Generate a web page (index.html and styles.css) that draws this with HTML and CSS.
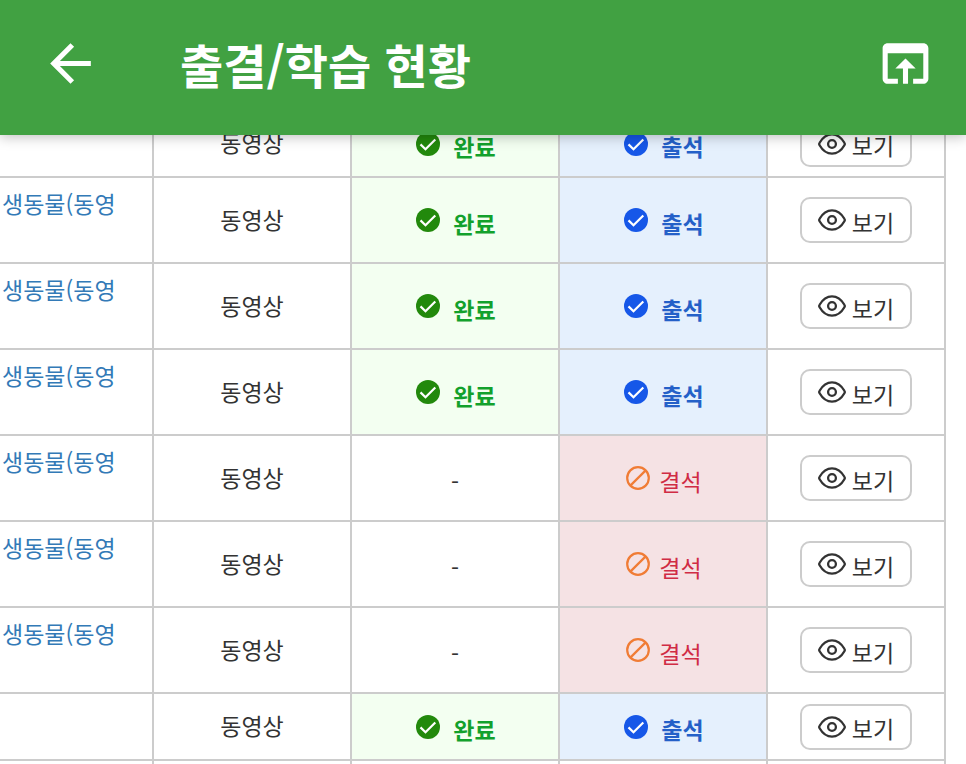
FILE: index.html
```
<!DOCTYPE html>
<html lang="ko">
<head>
    <meta charset="UTF-8">
    <meta name="viewport" content="width=device-width, initial-scale=1.0">
    <title>출결/학습 현황</title>
    <link rel="stylesheet" href="styles.css">
</head>
<body>
    <!-- shared icons -->
    <svg class="sprite" aria-hidden="true">
        <symbol id="check" viewBox="0 0 24 24">
            <circle cx="12" cy="12" r="12" fill="currentColor"/>
            <path d="M4.5 12.4l5 4.9 9.8-9.8" fill="none" stroke="#fff" stroke-width="2.2"/>
        </symbol>
        <symbol id="ban" viewBox="0 0 24 24">
            <circle cx="12" cy="12" r="10.8" fill="none" stroke="currentColor" stroke-width="2.2"/>
            <path d="M4.6 19.4L19.4 4.6" stroke="currentColor" stroke-width="2.2"/>
        </symbol>
        <symbol id="eye" viewBox="0 0 28 22">
            <path d="M1.6 12.2Q.8 11 1.6 9.8C4.6 4.6 9 1.4 14 1.4s9.4 3.2 12.4 8.4q.8 1.2 0 2.4C23.400 17.400 19 20.600 14 20.600S4.600 17.400 1.600 12.200z" fill="none" stroke="currentColor" stroke-width="2.3" stroke-linejoin="round"/>
            <circle cx="14" cy="11" r="3.9" fill="none" stroke="currentColor" stroke-width="2.3"/>
        </symbol>
    </svg>

    <header class="app-bar">
        <button class="icon-button" type="button" aria-label="뒤로">
            <svg viewBox="0 0 24 24"><path d="M20 11H7.83l5.59-5.59L12 4l-8 8 8 8 1.41-1.41L7.83 13H20v-2z"/></svg>
        </button>
        <h1 class="title">출결/학습 현황</h1>
        <button class="icon-button" type="button" aria-label="브라우저에서 열기">
            <svg viewBox="0 0 24 24"><path d="M19 4H5c-1.11 0-2 .9-2 2v12c0 1.1.89 2 2 2h4v-2H5V8h14v10h-4v2h4c1.1 0 2-.9 2-2V6c0-1.1-.89-2-2-2zm-7 6l-4 4h3v6h2v-6h3l-4-4z"/></svg>
        </button>
    </header>

    <main class="content">
        <table class="lessons">
            <colgroup>
                <col>
                <col class="col-type">
                <col class="col-status">
                <col class="col-status">
                <col class="col-view">
            </colgroup>
            <tbody>
                <tr class="short">
                    <td class="name"></td>
                    <td class="type">동영상</td>
                    <td class="done"><div class="status"><svg><use href="#check"/></svg><span>완료</span></div></td>
                    <td class="present"><div class="status"><svg><use href="#check"/></svg><span>출석</span></div></td>
                    <td><button class="view" type="button"><svg><use href="#eye"/></svg><span>보기</span></button></td>
                </tr>
                <tr>
                    <td class="name"><a href="#">생동물(동영</a></td>
                    <td class="type">동영상</td>
                    <td class="done"><div class="status"><svg><use href="#check"/></svg><span>완료</span></div></td>
                    <td class="present"><div class="status"><svg><use href="#check"/></svg><span>출석</span></div></td>
                    <td><button class="view" type="button"><svg><use href="#eye"/></svg><span>보기</span></button></td>
                </tr>
                <tr>
                    <td class="name"><a href="#">생동물(동영</a></td>
                    <td class="type">동영상</td>
                    <td class="done"><div class="status"><svg><use href="#check"/></svg><span>완료</span></div></td>
                    <td class="present"><div class="status"><svg><use href="#check"/></svg><span>출석</span></div></td>
                    <td><button class="view" type="button"><svg><use href="#eye"/></svg><span>보기</span></button></td>
                </tr>
                <tr>
                    <td class="name"><a href="#">생동물(동영</a></td>
                    <td class="type">동영상</td>
                    <td class="done"><div class="status"><svg><use href="#check"/></svg><span>완료</span></div></td>
                    <td class="present"><div class="status"><svg><use href="#check"/></svg><span>출석</span></div></td>
                    <td><button class="view" type="button"><svg><use href="#eye"/></svg><span>보기</span></button></td>
                </tr>
                <tr>
                    <td class="name"><a href="#">생동물(동영</a></td>
                    <td class="type">동영상</td>
                    <td class="none">-</td>
                    <td class="absent"><div class="status"><svg><use href="#ban"/></svg><span>결석</span></div></td>
                    <td><button class="view" type="button"><svg><use href="#eye"/></svg><span>보기</span></button></td>
                </tr>
                <tr>
                    <td class="name"><a href="#">생동물(동영</a></td>
                    <td class="type">동영상</td>
                    <td class="none">-</td>
                    <td class="absent"><div class="status"><svg><use href="#ban"/></svg><span>결석</span></div></td>
                    <td><button class="view" type="button"><svg><use href="#eye"/></svg><span>보기</span></button></td>
                </tr>
                <tr>
                    <td class="name"><a href="#">생동물(동영</a></td>
                    <td class="type">동영상</td>
                    <td class="none">-</td>
                    <td class="absent"><div class="status"><svg><use href="#ban"/></svg><span>결석</span></div></td>
                    <td><button class="view" type="button"><svg><use href="#eye"/></svg><span>보기</span></button></td>
                </tr>
                <tr class="short">
                    <td class="name"></td>
                    <td class="type">동영상</td>
                    <td class="done"><div class="status"><svg><use href="#check"/></svg><span>완료</span></div></td>
                    <td class="present"><div class="status"><svg><use href="#check"/></svg><span>출석</span></div></td>
                    <td><button class="view" type="button"><svg><use href="#eye"/></svg><span>보기</span></button></td>
                </tr>
                <tr>
                    <td></td>
                    <td></td>
                    <td></td>
                    <td></td>
                    <td></td>
                </tr>
            </tbody>
        </table>
    </main>
</body>
</html>
```

FILE: styles.css
```
* {
    box-sizing: border-box;
}
body {
    display: flex;
    flex-direction: column;
    height: 100vh;
    margin: 0;
    overflow: hidden;
    background-color: #fff;
    color: #333;
    font-family: "Noto Sans CJK KR", sans-serif;
    font-size: 23px;
    line-height: 32px;
}
button {
    font: inherit;
    color: inherit;
    cursor: pointer;
}
.sprite {
    position: absolute;
    width: 0;
    height: 0;
}

/* top bar */
.app-bar {
    position: relative;
    z-index: 1;
    display: flex;
    flex-shrink: 0;
    align-items: center;
    height: 135px;
    padding: 0 30px 8px 40px;
    background-color: #41a142;
    color: #fff;
    box-shadow: 0 2px 12px rgba(0, 0, 0, 0.25);
}
.icon-button {
    padding: 0;
    border: none;
    background: none;
}
.icon-button svg {
    display: block;
    width: 61px;
    height: 61px;
    fill: currentColor;
}
.title {
    flex: 1;
    margin: 0 0 0 79px;
    font-size: 47px;
    line-height: 64px;
    font-weight: bold;
}

/* lesson table, scrolled partly under the bar */
.content {
    flex: 1;
    min-height: 0;
    margin-top: -24px;
    padding-right: 20px;
    overflow: hidden;
}
.lessons {
    width: 100%;
    table-layout: fixed;
    border-collapse: separate;
    border-spacing: 0;
    text-align: center;
}
.col-type {
    width: 198px;
}
.col-status {
    width: 208px;
}
.col-view {
    width: 178px;
}
.lessons td {
    height: 86px;
    padding: 0;
    border-right: 2px solid #ccc;
    border-bottom: 2px solid #ccc;
    vertical-align: middle;
}
.lessons .short td {
    height: 67px;
}
.lessons .name {
    padding: 9px 0 0 2px;
    text-align: left;
    vertical-align: top;
}
.lessons .type {
    padding-bottom: 3px;
}
.lessons .none {
    padding-top: 6px;
}
.name a {
    color: #337ab7;
    text-decoration: none;
}
.status {
    display: flex;
    align-items: center;
    justify-content: center;
    gap: 13px;
    padding-left: 2px;
    font-weight: bold;
}
.status svg {
    width: 24px;
    height: 24px;
}
.status span {
    padding-top: 5px;
}
.done {
    background-color: #f3fff1;
    color: #12a12c;
}
.done svg {
    color: #22890c;
}
.present {
    background-color: #e5f0fd;
    color: #2460c8;
}
.present svg {
    color: #1657e8;
}
.absent {
    background-color: #f5e2e4;
    color: #d02c44;
}
.absent .status {
    gap: 9px;
    font-weight: normal;
}
.absent svg {
    color: #f07c35;
}
.view {
    display: inline-flex;
    align-items: center;
    gap: 6px;
    height: 46px;
    padding: 0 16px;
    border: 2px solid #ccc;
    border-radius: 10px;
    background-color: #fff;
    vertical-align: middle;
}
.view svg {
    width: 28px;
    height: 22px;
}
.view span {
    padding-top: 3px;
}
```
